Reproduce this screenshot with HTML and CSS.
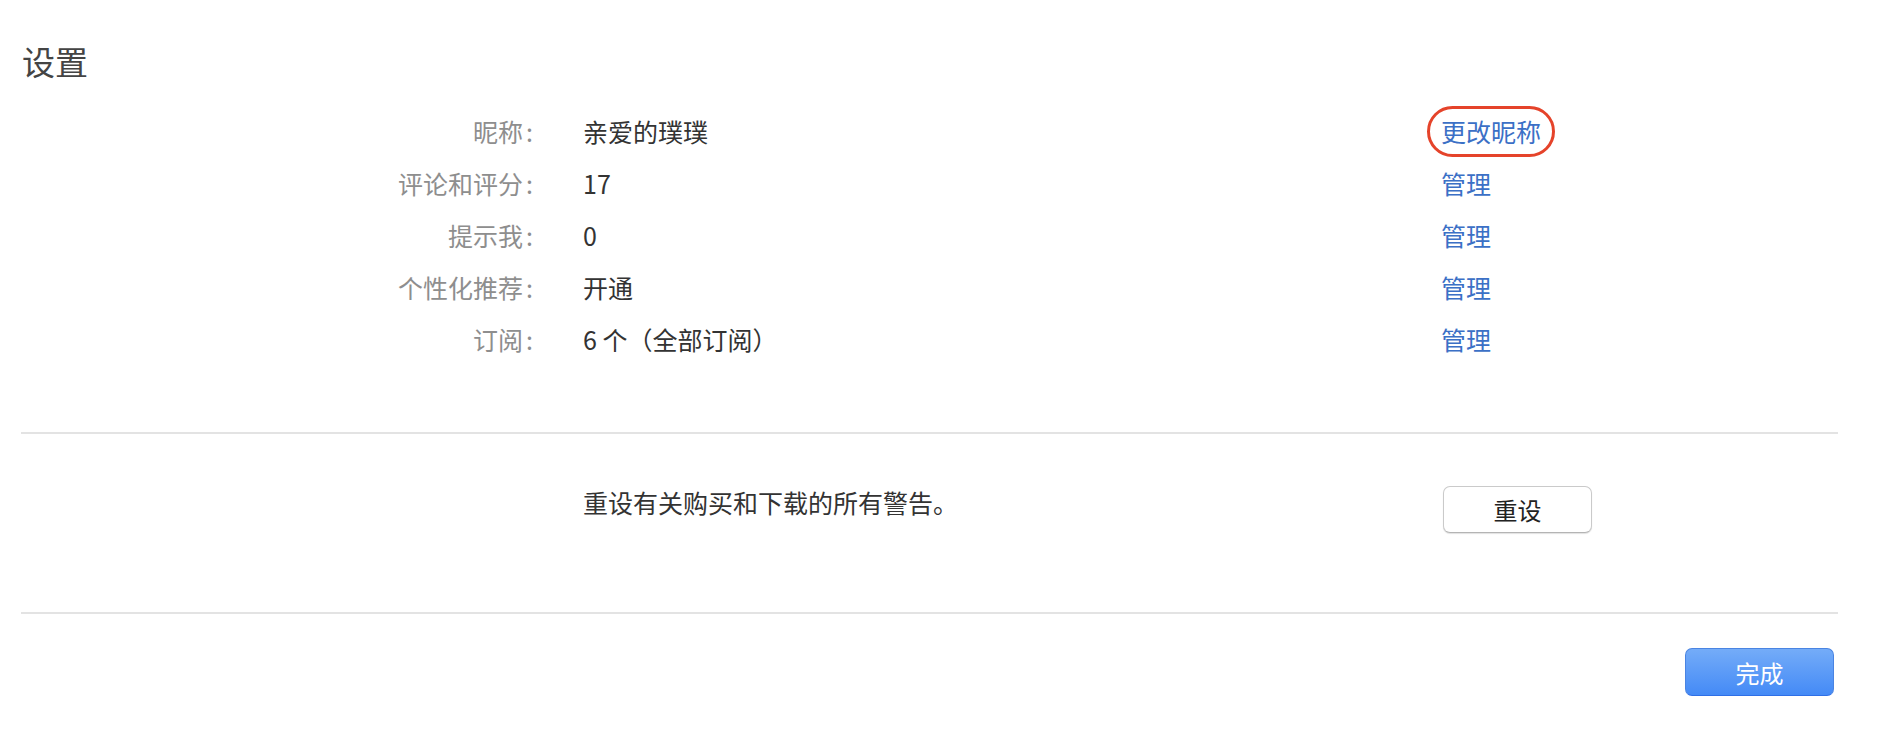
FILE: index.html
```html
<!DOCTYPE html>
<html lang="zh-CN">
<head>
    <meta charset="UTF-8">
    <meta name="viewport" content="width=device-width, initial-scale=1.0">
    <title>设置</title>
    <link rel="stylesheet" href="styles.css">
</head>
<body>
    <div class="page">
        <h1 class="title">设置</h1>

        <div class="settings">
            <div class="label">昵称<span class="colon">:</span></div>
            <div class="value">亲爱的璞璞</div>
            <div class="action"><a href="#" class="link highlight">更改昵称</a></div>

            <div class="label">评论和评分<span class="colon">:</span></div>
            <div class="value">17</div>
            <div class="action"><a href="#" class="link">管理</a></div>

            <div class="label">提示我<span class="colon">:</span></div>
            <div class="value">0</div>
            <div class="action"><a href="#" class="link">管理</a></div>

            <div class="label">个性化推荐<span class="colon">:</span></div>
            <div class="value">开通</div>
            <div class="action"><a href="#" class="link">管理</a></div>

            <div class="label">订阅<span class="colon">:</span></div>
            <div class="value">6 个（全部订阅）</div>
            <div class="action"><a href="#" class="link">管理</a></div>
        </div>

        <div class="reset-section">
            <div></div>
            <div class="reset-text">重设有关购买和下载的所有警告。</div>
            <div class="action"><button class="btn btn-reset">重设</button></div>
        </div>

        <div class="footer">
            <button class="btn btn-done">完成</button>
        </div>
    </div>
</body>
</html>
```

FILE: styles.css
```css
:root {
    --text: #333333;
    --muted: #8e8e8e;
    --link: #3b70c6;
    --divider: #e3e3e3;
    --highlight: #e5432a;
}

body {
    margin: 0;
    background: #FFFFFF;
    color: var(--text);
    font-family: "Noto Sans CJK SC", "Noto Sans", sans-serif;
}

.page {
    padding: 41px 46px 0 21px;
}

.title {
    margin: 0 0 24px 0;
    padding-left: 1px;
    font-size: 33px;
    line-height: 40px;
    font-weight: 400;
    color: #444444;
}

.settings,
.reset-section {
    display: grid;
    grid-template-columns: 516px 798px auto;
    column-gap: 46px;
}

.settings {
    font-size: 25px;
    line-height: 52px;
    padding-bottom: 67px;
    border-bottom: 2px solid var(--divider);
}

.label {
    padding-right: 4px;
    text-align: right;
    color: var(--muted);
}

.colon {
    padding-left: 3px;
}

.value {
    color: var(--text);
}

.action {
    display: flex;
    align-items: center;
}

.link {
    display: inline-block;
    padding: 0 11px;
    border: 3px solid transparent;
    border-radius: 26px;
    line-height: 45px;
    color: var(--link);
    text-decoration: none;
}

.link.highlight {
    border-color: var(--highlight);
}

.reset-section {
    padding: 52px 0 79px 0;
    border-bottom: 2px solid var(--divider);
    align-items: start;
}

.reset-text {
    font-size: 25px;
    line-height: 32px;
    color: var(--text);
}

.reset-section .action {
    padding-left: 16px;
}

.btn {
    width: 149px;
    border-radius: 7px;
    font-family: inherit;
    font-size: 24px;
    cursor: pointer;
}

.btn-reset {
    height: 47px;
    background: #FFFFFF;
    color: #222222;
    border: 1px solid #cacaca;
    border-bottom-color: #b4b4b4;
    box-shadow: 0 1px 1px rgba(0, 0, 0, 0.12);
}

.footer {
    display: flex;
    justify-content: flex-end;
    padding: 34px 4px 0 0;
}

.btn-done {
    height: 48px;
    color: #FFFFFF;
    background: linear-gradient(to bottom, #74acf8, #448af6);
    border: 1px solid #4a84e2;
    border-bottom-color: #2f6fe6;
}
```
